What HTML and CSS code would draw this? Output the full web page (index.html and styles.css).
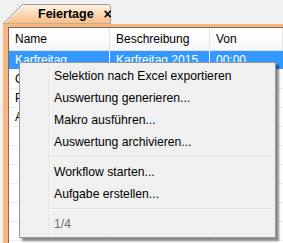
FILE: index.html
```html
<!DOCTYPE html>
<html>
<head>
<meta charset="utf-8">
<link rel="stylesheet" href="styles.css">
</head>
<body>
<div class="tabstrip">
  <div class="tab">
    <svg class="tab-shape" width="109" height="21" viewBox="0 0 109 21">
      <defs>
        <linearGradient id="tg" x1="0" y1="0" x2="0" y2="1">
          <stop offset="0" stop-color="#fef3e6"/>
          <stop offset="1" stop-color="#f8bb82"/>
        </linearGradient>
      </defs>
      <path d="M0 21 L19.5 1.5 L105.5 1.5 Q107.5 1.5 107.5 3.5 L107.5 21 Z" fill="url(#tg)" stroke="#9c9c9c" stroke-width="1"/>
      <path d="M2.5 20 L20 2.5" stroke="#ffffff" stroke-width="1" fill="none"/>
    </svg>
    <div class="tab-label"><span class="tab-title">Feiertage</span><span class="tab-close">×</span></div>
  </div>
</div>
<div class="frame">
  <div class="panel">
    <div class="row head">
      <div class="cell c1">Name</div>
      <div class="cell c2">Beschreibung</div>
      <div class="cell c3">Von</div>
    </div>
    <div class="row sel">
      <div class="cell c1">Karfreitag</div>
      <div class="cell c2">Karfreitag 2015</div>
      <div class="cell c3">00:00</div>
    </div>
    <div class="row">
      <div class="cell c1">Ostermontag</div>
      <div class="cell c2"></div>
      <div class="cell c3"></div>
    </div>
    <div class="row">
      <div class="cell c1">Pfingstmontag</div>
      <div class="cell c2"></div>
      <div class="cell c3"></div>
    </div>
    <div class="row">
      <div class="cell c1">Allerheiligen</div>
      <div class="cell c2"></div>
      <div class="cell c3"></div>
    </div>
    <div class="row"><div class="cell c1"></div><div class="cell c2"></div><div class="cell c3"></div></div>
    <div class="row"><div class="cell c1"></div><div class="cell c2"></div><div class="cell c3"></div></div>
    <div class="row"><div class="cell c1"></div><div class="cell c2"></div><div class="cell c3"></div></div>
    <div class="row"><div class="cell c1"></div><div class="cell c2"></div><div class="cell c3"></div></div>
    <div class="row"><div class="cell c1"></div><div class="cell c2"></div><div class="cell c3"></div></div>
    <div class="row"><div class="cell c1"></div><div class="cell c2"></div><div class="cell c3"></div></div>
  </div>
</div>
<div class="menu">
  <div class="item">Selektion nach Excel exportieren</div>
  <div class="item">Auswertung generieren...</div>
  <div class="item">Makro ausführen...</div>
  <div class="item">Auswertung archivieren...</div>
  <div class="sep"></div>
  <div class="item">Workflow starten...</div>
  <div class="item">Aufgabe erstellen...</div>
  <div class="sep"></div>
  <div class="item disabled">1/4</div>
</div>
</body>
</html>
```
FILE: styles.css
```css
html, body {
  margin: 0;
  padding: 0;
}
body {
  width: 283px;
  height: 243px;
  overflow: hidden;
  background: #f0f0f0;
  font-family: "Liberation Sans", Arial, sans-serif;
  font-size: 12px;
  color: #000;
  position: relative;
}
.tabstrip {
  height: 24px;
  box-sizing: border-box;
  padding: 3px 0 0 3px;
}
.tab {
  display: grid;
  width: 109px;
  height: 21px;
}
.tab-shape, .tab-label {
  grid-area: 1 / 1;
}
.tab-label {
  display: flex;
  align-items: center;
  padding-left: 35px;
  padding-top: 1px;
  font-weight: bold;
  font-size: 12.5px;
}
.tab-close {
  margin-left: 10px;
  font-size: 14px;
}
.frame {
  margin-left: 3px;
  height: 219px;
  box-sizing: border-box;
  padding: 3px 0 0 5px;
  background: #f8b57c;
}
.panel {
  height: 100%;
  box-sizing: border-box;
  border-left: 1px solid #6f6f6f;
  border-top: 1px solid #6f6f6f;
  background: #fff;
}
.row {
  display: flex;
  height: 19px;
  box-sizing: border-box;
  border-bottom: 1px solid #ececec;
}
.row.head {
  height: 23px;
  border-bottom: 1px solid #e0e0e0;
  background: linear-gradient(#ffffff, #f7f8f9);
}
.cell {
  box-sizing: border-box;
  padding-left: 6px;
  display: flex;
  align-items: center;
  white-space: nowrap;
  overflow: hidden;
  border-right: 1px solid #ececec;
}
.head .cell {
  border-right: 1px solid #e3e3e3;
}
.c1 { width: 101px; }
.c2 { width: 100px; }
.c3 { flex: 1; border-right: none; }
.row.sel {
  background: #3399ff;
  color: #fff;
  border-bottom-color: #fff;
}
.row.sel .cell {
  border-right-color: #fff;
}
.menu {
  position: absolute;
  left: 19px;
  top: 62px;
  width: 257px;
  height: 176px;
  box-sizing: border-box;
  border: 1px solid #979797;
  padding: 2px 0;
  background:
    linear-gradient(to right, transparent 29px, #e2e3e3 29px, #e2e3e3 30px, #ffffff 30px, #ffffff 31px, transparent 31px),
    #f0f0f0;
  box-shadow: 3px 3px 2px rgba(0, 0, 0, 0.45);
}
.item {
  height: 22px;
  line-height: 22px;
  padding-left: 34px;
  white-space: nowrap;
  font-size: 12.2px;
}
.item.disabled {
  color: #6d6d6d;
}
.sep {
  height: 8px;
  margin-left: 31px;
  margin-right: 2px;
  background: linear-gradient(transparent 3px, #e0e0e0 3px, #e0e0e0 4px, #fff 4px, #fff 5px, transparent 5px);
}
```
